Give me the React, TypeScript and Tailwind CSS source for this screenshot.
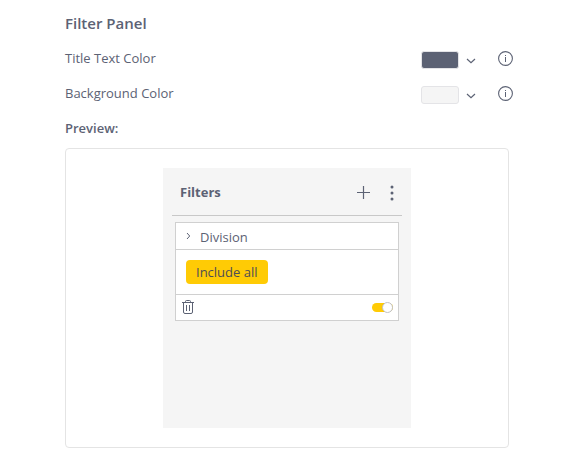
import clsx from "clsx";
import { useState } from "react";

interface PropsColorRow {
  label: string;
  swatch: string;
}

const ChevronIcon = () => (
  <svg width="10" height="6" viewBox="0 0 10 6" fill="none" stroke="currentColor" strokeWidth="1.2">
    <path d="M1 1l4 3.6L9 1" />
  </svg>
);

const InfoIcon = () => (
  <svg width="16" height="16" viewBox="0 0 16 16" fill="none" stroke="currentColor">
    <circle cx="7.5" cy="7.5" r="6.9" strokeWidth="1.1" />
    <path d="M7.5 6v5M7.5 4v1" strokeWidth="1" />
  </svg>
);

const TrashIcon = () => (
  <svg width="12" height="14" viewBox="0 0 12 14" fill="none" stroke="currentColor" strokeWidth="1">
    <path d="M0 2.5h12M3.5 2.5v-1q0-1 1-1h3q1 0 1 1v1M1.5 2.5v9.5q0 1.5 1.5 1.5h6q1.5 0 1.5-1.5v-9.5M4.5 5v6M7.5 5v6" />
  </svg>
);

const ColorRow = ({ label, swatch }: PropsColorRow) => {
  return (
    <div className="flex h-[35px] items-center">
      <span className="flex-1">{label}</span>
      <button
        type="button"
        aria-label={label}
        className="mr-[22px] flex cursor-pointer items-center gap-[7px]"
      >
        <span className={clsx("mt-1 h-[18px] w-[38px] rounded-[3px] border border-[#e4e4e7]", swatch)} />
        <span className="pt-[7px]">
          <ChevronIcon />
        </span>
      </button>
      <button type="button" aria-label={`About ${label}`} className="cursor-pointer pt-0.5">
        <InfoIcon />
      </button>
    </div>
  );
};

const FilterCard = () => {
  const [enabled, setEnabled] = useState(true);

  return (
    <div className="mx-3 mt-1.5 divide-y divide-[#d0d0d0] border border-[#d0d0d0] bg-white">
      <button type="button" className="flex h-[27px] w-full cursor-pointer items-center pt-0.5 pl-2.5">
        <svg className="-mt-0.5" width="6" height="8" viewBox="0 0 6 8" fill="none" stroke="currentColor" strokeWidth="1">
          <path d="M1 1l2.7 3L1 7" />
        </svg>
        <span className="pl-2">Division</span>
      </button>
      <div className="flex h-[45px] items-center px-2.5">
        <button
          type="button"
          className="h-6 cursor-pointer rounded-[4px] bg-[#ffcb05] px-2.5 text-[#4d4d55]"
        >
          Include all
        </button>
      </div>
      <div className="flex h-[25px] items-center justify-between pr-[5px] pl-1.5">
        <button type="button" aria-label="Delete filter" className="cursor-pointer pb-0.5">
          <TrashIcon />
        </button>
        <label className="flex cursor-pointer items-center">
          <input
            type="checkbox"
            aria-label="Enable filter"
            className="peer sr-only"
            checked={enabled}
            onChange={(e) => setEnabled(e.target.checked)}
          />
          <span
            className={clsx(
              "flex h-[9px] w-[21px] items-center rounded-full",
              enabled ? "justify-end bg-[#ffcb05]" : "justify-start bg-[#c8c8cc]"
            )}
          >
            <span className="size-[11px] shrink-0 rounded-full border border-[#bfc1c7] bg-white" />
          </span>
        </label>
      </div>
    </div>
  );
};

const App = () => {
  return (
    <main className="bg-white pt-[5px] pr-[66px] pb-5 pl-[65px] font-['Open_Sans',sans-serif] text-[13px] leading-5 text-[#5c6274]">
      <h2 className="flex h-[35px] items-center text-[15px] font-semibold">Filter Panel</h2>
      <ColorRow label="Title Text Color" swatch="bg-[#5c6274]" />
      <ColorRow label="Background Color" swatch="bg-[#f5f5f5]" />
      <h3 className="flex h-[35px] items-center font-semibold">Preview:</h3>
      <div className="mt-[3px] mr-[5px] flex justify-center rounded-[4px] border border-[#e4e4e4] py-[19px]">
        <section className="min-h-[260px] w-[248px] bg-[#f5f5f5]">
          <header className="mx-[9px] flex h-12 items-center border-b border-[#c8c8c8] pl-2">
            <h4 className="flex-1 font-bold">Filters</h4>
            <button type="button" aria-label="Add filter" className="cursor-pointer pt-0.5">
              <svg width="13" height="13" viewBox="0 0 13 13" fill="none" stroke="currentColor" strokeWidth="1.2">
                <path d="M0 6.5h13M6.5 0v13" />
              </svg>
            </button>
            <button type="button" aria-label="More options" className="mr-2 ml-5 cursor-pointer pt-0.5">
              <svg width="4" height="16" viewBox="0 0 4 16" fill="currentColor">
                <circle cx="2" cy="2" r="1.5" />
                <circle cx="2" cy="8" r="1.5" />
                <circle cx="2" cy="14" r="1.5" />
              </svg>
            </button>
          </header>
          <FilterCard />
        </section>
      </div>
    </main>
  );
};

export default App;
